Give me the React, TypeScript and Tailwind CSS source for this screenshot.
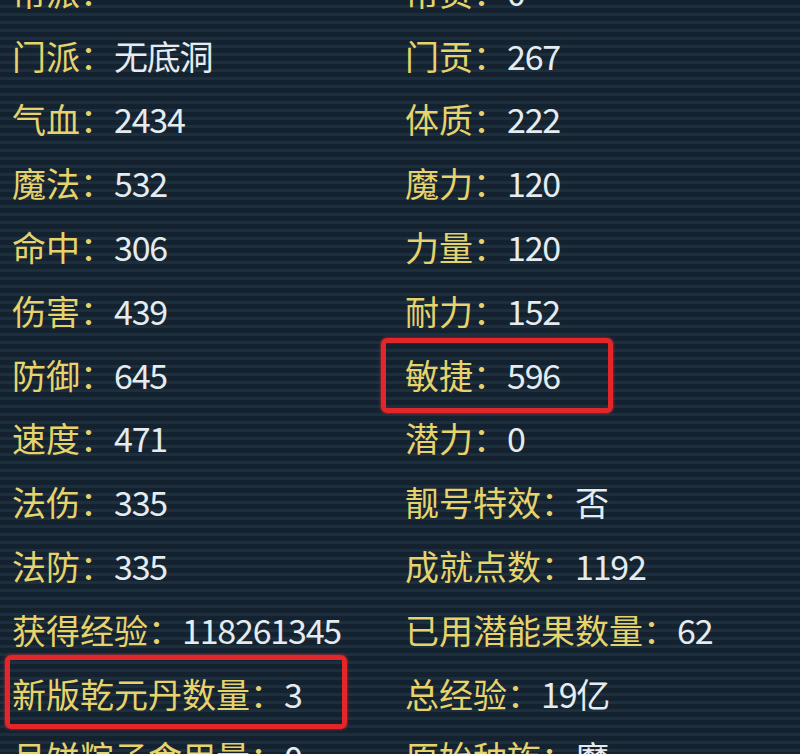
import React from "react";

type Cell = { label: string; value: string; boxed?: boolean };

const rows: [Cell, Cell][] = [
  [{ label: "帮派", value: "" }, { label: "帮贡", value: "0" }],
  [{ label: "门派", value: "无底洞" }, { label: "门贡", value: "267" }],
  [{ label: "气血", value: "2434" }, { label: "体质", value: "222" }],
  [{ label: "魔法", value: "532" }, { label: "魔力", value: "120" }],
  [{ label: "命中", value: "306" }, { label: "力量", value: "120" }],
  [{ label: "伤害", value: "439" }, { label: "耐力", value: "152" }],
  [{ label: "防御", value: "645" }, { label: "敏捷", value: "596", boxed: true }],
  [{ label: "速度", value: "471" }, { label: "潜力", value: "0" }],
  [{ label: "法伤", value: "335" }, { label: "靓号特效", value: "否" }],
  [{ label: "法防", value: "335" }, { label: "成就点数", value: "1192" }],
  [{ label: "获得经验", value: "118261345" }, { label: "已用潜能果数量", value: "62" }],
  [{ label: "新版乾元丹数量", value: "3", boxed: true }, { label: "总经验", value: "19亿" }],
  [{ label: "月饼粽子食用量", value: "0" }, { label: "原始种族", value: "魔" }],
];

function StatCell({ cell, side }: { cell: Cell; side: "l" | "r" }) {
  return (
    <div className="relative flex h-[63.8px] items-center whitespace-nowrap">
      <span className="text-[#e6d36c]">{cell.label}：</span>
      <span className="tracking-[-1.2px] text-[#e4ecf0]">{cell.value}</span>
      {cell.boxed && side === "r" && (
        <div className="absolute left-[-24px] top-[-5px] h-[75px] w-[232px] rounded-[6px] border-[5px] border-[#e3262a] shadow-[0_0_3px_#e3262a]" />
      )}
      {cell.boxed && side === "l" && (
        <div className="absolute left-[-7px] top-[-7px] h-[74px] w-[342px] rounded-[6px] border-[5px] border-[#e3262a] shadow-[0_0_3px_#e3262a]" />
      )}
    </div>
  );
}

export default function App() {
  return (
    <div
      className="h-[754px] w-[800px] overflow-hidden bg-[#142230] bg-[repeating-linear-gradient(180deg,#142230_0px,#142230_5px,#1c2f3e_5px,#1c2f3e_8px)] text-[34px] leading-none"
      style={{ fontFamily: '"Noto Sans CJK SC", "Noto Sans", sans-serif' }}
    >
      <div className="-mt-[40px] grid grid-cols-[393px_1fr] pl-[12px]">
        {rows.map(([l, r], i) => (
          <React.Fragment key={i}>
            <StatCell cell={l} side="l" />
            <StatCell cell={r} side="r" />
          </React.Fragment>
        ))}
      </div>
    </div>
  );
}
